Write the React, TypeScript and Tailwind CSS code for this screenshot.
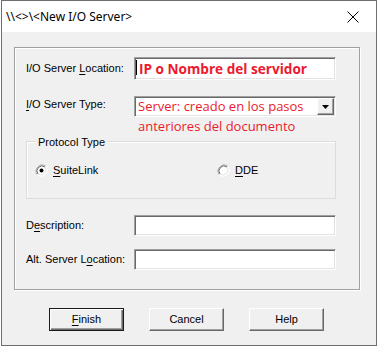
import React from 'react';

const sans = "font-['Liberation_Sans',Arial,sans-serif]";

const Sunken = ({ className = '', children }: any) => (
  <div
    className={`bg-white border border-t-[#a0a0a0] border-l-[#a0a0a0] border-b-white border-r-white shadow-[inset_1px_1px_0_#696969,inset_-1px_-1px_0_#e3e3e3] ${className}`}
  >
    {children}
  </div>
);

const Row = ({ label, children, className = '' }: any) => (
  <div className={`flex items-center ${className}`}>
    <div className={`w-[108px] text-[11px] text-black ${sans}`}>{label}</div>
    {children}
  </div>
);

const U = ({ children }: any) => <span className="underline underline-offset-[2px]">{children}</span>;

const Radio = ({ checked }: { checked?: boolean }) => (
  <svg width="13" height="13" viewBox="0 0 13 13" className="shrink-0">
    <circle cx="6.5" cy="6.5" r="6" fill="#fff" />
    <path d="M2.3 10.7 A6 6 0 0 1 10.7 2.3" fill="none" stroke="#a0a0a0" strokeWidth="1" />
    <path d="M10.7 2.3 A6 6 0 0 1 2.3 10.7" fill="none" stroke="#ffffff" strokeWidth="1" />
    <path d="M3 10 A5 5 0 0 1 10 3" fill="none" stroke="#696969" strokeWidth="1" />
    <path d="M10 3 A5 5 0 0 1 3 10" fill="none" stroke="#e3e3e3" strokeWidth="1" />
    {checked && <circle cx="6.5" cy="6.5" r="2" fill="#000" />}
  </svg>
);

const Button = ({ children, primary }: any) => (
  <button
    className={`w-[75px] h-[23px] bg-[#f0f0f0] text-[11px] text-black ${sans} ${
      primary
        ? 'border border-[#1a1a1a] shadow-[inset_1px_1px_0_#fff,inset_-1px_-1px_0_#696969,inset_-2px_-2px_0_#a0a0a0]'
        : 'border border-t-white border-l-white border-b-[#696969] border-r-[#696969] shadow-[inset_-1px_-1px_0_#a0a0a0]'
    }`}
  >
    {children}
  </button>
);

export default function App() {
  return (
    <div className="w-[378px] h-[347px] bg-white">
      <div className="ml-px w-[376px] h-[346px] border border-[#6e6e6e] bg-[#f0f0f0] flex flex-col">
        {/* title bar */}
        <div className="h-[31px] bg-white flex items-center justify-between pl-[4px] pr-[17px] shrink-0">
          <span className="text-[12px] text-black font-['Noto_Sans',sans-serif]">{'\\\\<>\\<New I/O Server>'}</span>
          <svg width="12" height="12" viewBox="0 0 12 12">
            <path d="M0.5 0.5 L11.5 11.5 M11.5 0.5 L0.5 11.5" stroke="#000" strokeWidth="1" />
          </svg>
        </div>

        {/* main panel */}
        <div className="ml-[12px] mt-[15px] w-[346px] h-[243px] border border-[#a0a0a0] shadow-[inset_1px_1px_0_#fff,1px_1px_0_#fff] pl-[11px] pt-[9px] flex flex-col">
          <Row label={<>I/O Server <U>L</U>ocation:</>}>
            <Sunken className="w-[202px] h-[23px] flex items-center relative">
              <div className="absolute left-[1px] top-[2px] w-px h-[15px] bg-black" />
              <span className="pl-[4px] text-[13.6px] font-bold text-[#ec1a2e] font-['Open_Sans',sans-serif] leading-none">
                IP o Nombre del servidor
              </span>
            </Sunken>
          </Row>

          <Row label={<><U>I</U>/O Server Type:</>} className="mt-[16px] items-start">
            <div className="w-[202px] h-[21px] relative self-center">
              <Sunken className="w-full h-full" />
              <div className="absolute left-[4px] top-[0px] text-[13px] leading-[20px] text-[#ec1a2e] font-['Open_Sans',sans-serif] whitespace-nowrap">
                Server: creado en los pasos
                <br />
                anteriores del documento
              </div>
              <div className="absolute right-[2px] top-[2px] w-[17px] h-[17px] bg-[#f0f0f0] border border-t-white border-l-white border-b-[#696969] border-r-[#696969] shadow-[inset_-1px_-1px_0_#a0a0a0] flex items-center justify-center">
                <svg width="7" height="4" viewBox="0 0 7 4">
                  <path d="M0 0 H7 L3.5 4 Z" fill="#000" />
                </svg>
              </div>
            </div>
          </Row>

          {/* protocol group */}
          <div className="relative mt-[24px] w-[310px] h-[58px] border border-[#dcdcdc] shadow-[inset_1px_1px_0_#fff] flex items-center pl-[8px]">
            <span className={`absolute left-[9px] -top-[8px] px-[2px] bg-[#f0f0f0] text-[11px] text-black ${sans}`}>
              Protocol Type
            </span>
            <div className="w-[182px] flex items-center gap-[5px] pt-[1px]">
              <Radio checked />
              <span className={`text-[11px] text-black ${sans}`}>
                <U>S</U>uiteLink
              </span>
            </div>
            <div className="flex items-center gap-[5px] pt-[1px]">
              <Radio />
              <span className={`text-[11px] text-black ${sans}`}>
                <U>D</U>DE
              </span>
            </div>
          </div>

          <Row label={<>D<U>e</U>scription:</>} className="mt-[16px]">
            <Sunken className="w-[202px] h-[21px]" />
          </Row>

          <Row label={<>Alt. Server L<U>o</U>cation:</>} className="mt-[13px]">
            <Sunken className="w-[202px] h-[21px]" />
          </Row>
        </div>

        {/* buttons */}
        <div className="mt-[18px] pl-[47px] flex gap-[25px]">
          <Button primary>
            <U>F</U>inish
          </Button>
          <Button>Cancel</Button>
          <Button>Help</Button>
        </div>
      </div>
    </div>
  );
}
